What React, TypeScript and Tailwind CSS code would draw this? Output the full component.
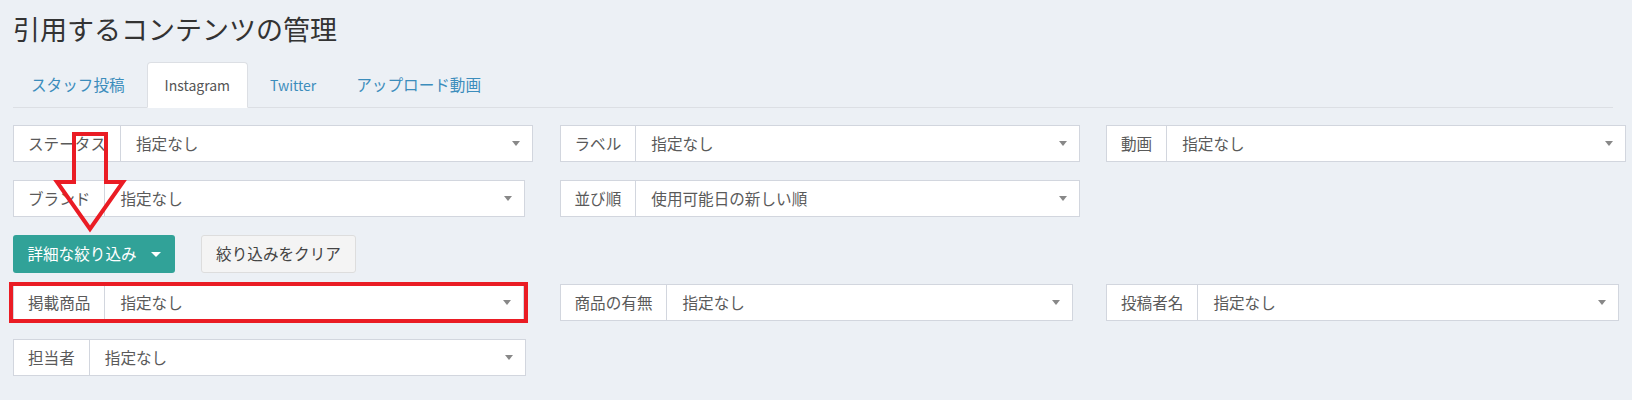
import React from "react";

const font = { fontFamily: '"Noto Sans CJK JP", "Noto Sans", sans-serif' };

function Select({
  label,
  value,
  className = "",
}: {
  label: string;
  value: string;
  className?: string;
}) {
  return (
    <div
      className={
        "flex h-[37px] border border-[#d2d6de] bg-white text-[15.6px] text-[#5a5a5a] " +
        className
      }
    >
      <div className="flex items-center border-r border-[#d2d6de] px-[14px] whitespace-nowrap">
        {label}
      </div>
      <div className="flex flex-1 items-center justify-between pl-[15px] pr-[12px]">
        <span className="whitespace-nowrap">{value}</span>
        <span className="h-0 w-0 border-x-[4px] border-t-[5px] border-x-transparent border-t-[#888]" />
      </div>
    </div>
  );
}

function Tabs() {
  const tabs = [
    { t: "スタッフ投稿", latin: false },
    { t: "Instagram", latin: true },
    { t: "Twitter", latin: true },
    { t: "アップロード動画", latin: false },
  ];
  return (
    <div className="mr-[13px] mt-[18px] flex h-[46px] border-b border-[#dcdfe4]">
      {tabs.map(({ t, latin }) => {
        const active = t === "Instagram";
        return (
          <div
            key={t}
            className={
              "mr-[4px] flex h-[46px] items-center rounded-t-[4px] border px-[17px] " +
              (latin ? "text-[14px] " : "text-[15.6px] ") +
              (active
                ? "border-[#dcdfe4] border-b-white bg-white text-[#555]"
                : "border-transparent text-[#3c8dbc]")
            }
          >
            {t}
          </div>
        );
      })}
    </div>
  );
}

function Arrow() {
  return (
    <svg
      className="pointer-events-none absolute left-0 top-0"
      width="1632"
      height="400"
      viewBox="0 0 1632 400"
    >
      <polygon
        points="74,134 106,134 106,182 123,182 90,229 57,182 74,182"
        fill="none"
        stroke="#ea1c24"
        strokeWidth="4"
        strokeLinejoin="miter"
      />
    </svg>
  );
}

export default function App() {
  return (
    <div
      className="relative min-h-[400px] w-[1632px] bg-[#ecf0f5] pl-[13px] pr-[6px] pt-[14px]"
      style={font}
    >
      <h1 className="text-[27px] leading-[30px] text-[#333]">
        引用するコンテンツの管理
      </h1>
      <Tabs />

      <div className="mt-[17px] grid grid-cols-[520px_520px_520px] gap-x-[26.5px]">
        <Select label="ステータス" value="指定なし" />
        <Select label="ラベル" value="指定なし" />
        <Select label="動画" value="指定なし" />
      </div>

      <div className="mt-[18px] grid grid-cols-[520px_520px_520px] gap-x-[26.5px]">
        <Select label="ブランド" value="指定なし" className="mr-[8px]" />
        <Select label="並び順" value="使用可能日の新しい順" />
      </div>

      <div className="mt-[18px] flex gap-[26px]">
        <button className="flex h-[38px] w-[162px] items-center justify-center gap-[14px] rounded-[3px] bg-[#31a298] text-[15.6px] text-white">
          詳細な絞り込み
          <span className="h-0 w-0 border-x-[5px] border-t-[5px] border-x-transparent border-t-white" />
        </button>
        <button className="flex h-[38px] w-[155px] items-center justify-center rounded-[3px] border border-[#dddddd] bg-[#f4f4f4] text-[15.6px] text-[#444]">
          絞り込みをクリア
        </button>
      </div>

      <div className="mt-[11px] grid grid-cols-[520px_520px_520px] gap-x-[26.5px]">
        <div className="relative mr-[9px]">
          <Select label="掲載商品" value="指定なし" />
          <div className="pointer-events-none absolute -bottom-[2px] -left-[4px] -right-[4px] -top-[2px] border-[4px] border-[#ea1c24]" />
        </div>
        <Select label="商品の有無" value="指定なし" className="mr-[7px]" />
        <Select label="投稿者名" value="指定なし" className="mr-[7px]" />
      </div>

      <div className="mt-[18px] grid grid-cols-[520px_520px_520px] gap-x-[26.5px] pb-[24px]">
        <Select label="担当者" value="指定なし" className="mr-[7px]" />
      </div>

      <Arrow />
    </div>
  );
}
